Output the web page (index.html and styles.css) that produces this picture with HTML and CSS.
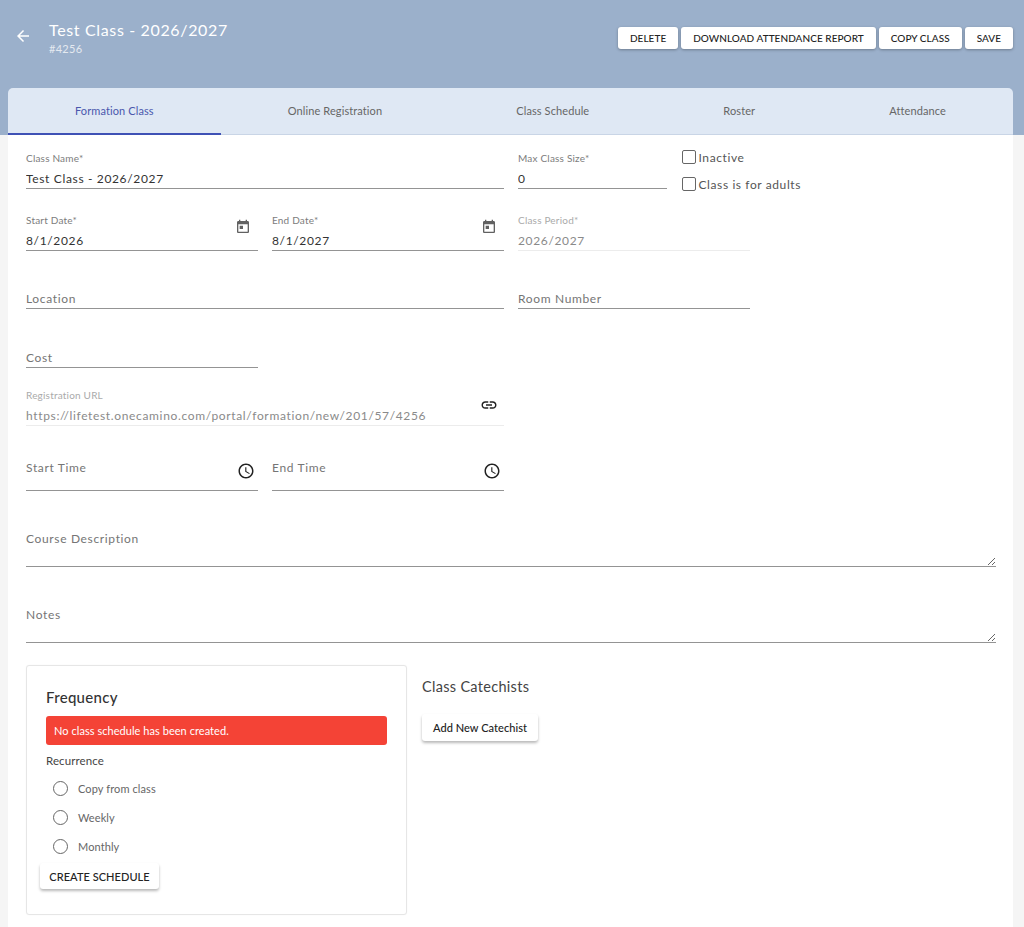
FILE: index.html
```html
<!DOCTYPE html>
<html lang="en">
<head>
  <meta charset="UTF-8" />
  <meta name="viewport" content="width=device-width, initial-scale=1.0"/>
  <title>Test Class - 2026/2027</title>
  <link rel="stylesheet" href="styles.css">
</head>
<body>
  <header class="hero">
    <div class="hero-top">
      <a class="back-link">
        <svg class="back-icon" viewBox="0 0 24 24"><path d="M20 11H7.83l5.59-5.59L12 4l-8 8 8 8 1.41-1.41L7.83 13H20v-2z"/></svg>
      </a>
      <div class="hero-title">
        <h1>Test Class - 2026/2027</h1>
        <p>#4256</p>
      </div>
      <div class="hero-actions">
        <button class="btn">Delete</button>
        <button class="btn">Download Attendance Report</button>
        <button class="btn">Copy Class</button>
        <button class="btn">Save</button>
      </div>
    </div>

    <nav class="tabs">
      <a class="tab active">Formation Class</a>
      <a class="tab">Online Registration</a>
      <a class="tab">Class Schedule</a>
      <a class="tab">Roster</a>
      <a class="tab">Attendance</a>
    </nav>
  </header>

  <main class="panel">
    <div class="row row-first">
      <div class="field w-double">
        <label>Class Name*</label>
        <input type="text" value="Test Class - 2026/2027" />
      </div>
      <div class="field w-small">
        <label>Max Class Size*</label>
        <input type="text" value="0" />
      </div>
      <div class="checks">
        <label class="check"><input type="checkbox" /> Inactive</label>
        <label class="check"><input type="checkbox" /> Class is for adults</label>
      </div>
    </div>

    <div class="row row-dates">
      <div class="field w-single">
        <label>Start Date*</label>
        <input type="text" value="8/1/2026" />
        <svg class="icon icon-date" viewBox="0 0 24 24"><path d="M19 3h-1V1h-2v2H8V1H6v2H5c-1.11 0-1.99.9-1.99 2L3 19c0 1.1.89 2 2 2h14c1.1 0 2-.9 2-2V5c0-1.1-.9-2-2-2zm0 16H5V8h14v11zM7 10h5v5H7z"/></svg>
      </div>
      <div class="field w-single">
        <label>End Date*</label>
        <input type="text" value="8/1/2027" />
        <svg class="icon icon-date" viewBox="0 0 24 24"><path d="M19 3h-1V1h-2v2H8V1H6v2H5c-1.11 0-1.99.9-1.99 2L3 19c0 1.1.89 2 2 2h14c1.1 0 2-.9 2-2V5c0-1.1-.9-2-2-2zm0 16H5V8h14v11zM7 10h5v5H7z"/></svg>
      </div>
      <div class="field w-single disabled">
        <label>Class Period*</label>
        <input type="text" value="2026/2027" disabled />
      </div>
    </div>

    <div class="row">
      <div class="field w-double">
        <input type="text" placeholder="Location" />
      </div>
      <div class="field w-single">
        <input type="text" placeholder="Room Number" />
      </div>
    </div>

    <div class="row row-cost">
      <div class="field w-single">
        <input type="text" placeholder="Cost" />
      </div>
    </div>

    <div class="row">
      <div class="field w-double disabled">
        <label>Registration URL</label>
        <input type="text" value="https://lifetest.onecamino.com/portal/formation/new/201/57/4256" disabled />
        <svg class="icon icon-link" viewBox="0 0 24 24"><path d="M3.9 12c0-1.71 1.39-3.1 3.1-3.1h4V7H7c-2.76 0-5 2.24-5 5s2.24 5 5 5h4v-1.9H7c-1.71 0-3.1-1.39-3.1-3.1zM8 13h8v-2H8v2zm9-6h-4v1.9h4c1.71 0 3.1 1.39 3.1 3.1s-1.39 3.1-3.1 3.1h-4V17h4c2.76 0 5-2.24 5-5s-2.24-5-5-5z"/></svg>
      </div>
    </div>

    <div class="row row-times">
      <div class="field w-single time">
        <input type="text" placeholder="Start Time" />
        <svg class="icon icon-time" viewBox="0 0 24 24"><path d="M11.99 2C6.47 2 2 6.48 2 12s4.47 10 9.99 10C17.52 22 22 17.52 22 12S17.52 2 11.99 2zM12 20c-4.42 0-8-3.58-8-8s3.58-8 8-8 8 3.58 8 8-3.58 8-8 8zm.5-13H11v6l5.25 3.15.75-1.23-4.5-2.67z"/></svg>
      </div>
      <div class="field w-single time">
        <input type="text" placeholder="End Time" />
        <svg class="icon icon-time" viewBox="0 0 24 24"><path d="M11.99 2C6.47 2 2 6.48 2 12s4.47 10 9.99 10C17.52 22 22 17.52 22 12S17.52 2 11.99 2zM12 20c-4.42 0-8-3.58-8-8s3.58-8 8-8 8 3.58 8 8-3.58 8-8 8zm.5-13H11v6l5.25 3.15.75-1.23-4.5-2.67z"/></svg>
      </div>
    </div>

    <div class="row row-text">
      <div class="field w-full">
        <textarea placeholder="Course Description"></textarea>
      </div>
    </div>

    <div class="row row-text">
      <div class="field w-full">
        <textarea placeholder="Notes"></textarea>
      </div>
    </div>

    <div class="bottom">
      <section class="frequency">
        <h2>Frequency</h2>
        <div class="alert">No class schedule has been created.</div>
        <p class="recurrence">Recurrence</p>
        <label class="radio"><input type="radio" name="recurrence" /> Copy from class</label>
        <label class="radio"><input type="radio" name="recurrence" /> Weekly</label>
        <label class="radio"><input type="radio" name="recurrence" /> Monthly</label>
        <button class="btn btn-raised btn-create">Create Schedule</button>
      </section>

      <section class="catechists">
        <h2>Class Catechists</h2>
        <button class="btn btn-raised btn-add">Add New Catechist</button>
      </section>
    </div>
  </main>
</body>
</html>
```

FILE: styles.css
```css
* {
  box-sizing: border-box;
}

html,
body {
  height: 100%;
}

body {
  margin: 0;
  display: flex;
  flex-direction: column;
  overflow: hidden;
  background: #f5f5f5;
  color: #333;
  font-family: Lato, "Open Sans", sans-serif;
}

/* Header */
.hero {
  height: 135px;
  padding: 0 11px 0 8px;
  background: #9bb0cb;
  display: flex;
  flex-direction: column;
  flex-shrink: 0;
}

.hero-top {
  height: 88px;
  display: flex;
  align-items: flex-start;
}

.back-link {
  margin: 27px 0 0 6px;
  height: 18px;
}

.back-icon {
  width: 18px;
  height: 18px;
  fill: #fff;
  display: block;
}

.hero-title {
  margin: 21px 0 0 17px;
  color: #fff;
}

.hero-title h1 {
  margin: 0;
  font-size: 16px;
  line-height: 18px;
  font-weight: 400;
  letter-spacing: 0.65px;
}

.hero-title p {
  margin: 3px 0 0;
  font-size: 11px;
  line-height: 14px;
  color: #e4e9f0;
  letter-spacing: 0.3px;
}

.hero-actions {
  margin: 27px 0 0 auto;
  display: flex;
  gap: 3px;
}

.btn {
  height: 22px;
  padding: 0 12px;
  border: none;
  border-radius: 3px;
  background: #fff;
  color: #222;
  font-family: inherit;
  font-size: 10px;
  font-weight: 500;
  text-transform: uppercase;
  letter-spacing: 0.05px;
  box-shadow: 0 1px 3px rgba(0, 0, 0, 0.3);
  cursor: pointer;
}

.btn-raised {
  box-shadow: 0 2px 3px rgba(0, 0, 0, 0.28);
}

/* Tabs */
.tabs {
  height: 47px;
  display: flex;
  background: #dfe8f4;
  border-radius: 5px 5px 0 0;
  border-bottom: 1px solid #c9d5e6;
}

.tab {
  flex: 1 1 auto;
  text-align: center;
  padding-top: 16px;
  height: 47px;
  font-size: 11px;
  line-height: 14px;
  color: #666;
  letter-spacing: 0.1px;
}

.tab.active {
  color: #4a57ad;
  border-bottom: 2px solid #3f51b5;
}

/* Form */
.panel {
  flex: 1;
  margin: 0 11px 0 8px;
  padding: 14px 17px 0 18px;
  background: #fff;
}

.row {
  display: flex;
  align-items: flex-end;
  gap: 14.5px;
  height: 40px;
  margin-top: 18px;
}

.row-first {
  margin-top: 0;
}

.row-dates {
  margin-top: 22px;
}

.row-cost {
  margin-top: 19px;
}

.row-times {
  height: 47px;
}

.row-text {
  height: 58px;
}

.field {
  position: relative;
  display: flex;
  flex-direction: column;
}

.w-single {
  width: 231.5px;
}

.w-double {
  width: 477.5px;
}

.w-small {
  width: 149px;
}

.w-full {
  width: 970px;
}

.field label {
  font-size: 10px;
  line-height: 13px;
  color: #7c7c7c;
  letter-spacing: 0.2px;
}

.field input,
.field textarea {
  display: block;
  width: 100%;
  height: 20px;
  padding: 0;
  margin-top: 4px;
  border: none;
  border-bottom: 1px solid #949494;
  border-radius: 0;
  outline: none;
  background: transparent;
  color: #333;
  font-family: inherit;
  font-size: 12px;
  letter-spacing: 0.65px;
}

.field input::placeholder,
.field textarea::placeholder {
  color: #757575;
  opacity: 1;
}

.field.time input {
  height: 34px;
  padding-bottom: 13px;
}

.field textarea {
  height: 40px;
  padding-top: 4px;
  line-height: 16px;
  resize: vertical;
}

.field.disabled label {
  color: #aaa;
}

.field.disabled input {
  color: #8a8a8a;
  border-bottom-color: #ececec;
}

.icon {
  position: absolute;
}

.icon-date {
  width: 16px;
  height: 16px;
  right: 7px;
  top: 5px;
  fill: #616161;
}

.icon-link {
  width: 18px;
  height: 18px;
  right: 6px;
  top: 7px;
  fill: #222;
}

.icon-time {
  width: 18px;
  height: 18px;
  right: 3px;
  top: 9px;
  fill: #222;
}

/* Checkboxes */
.checks {
  align-self: flex-start;
  margin-top: -1px;
  display: flex;
  flex-direction: column;
  gap: 9px;
}

.check {
  display: flex;
  align-items: center;
  gap: 3px;
  height: 18px;
  font-size: 12px;
  color: #555;
  letter-spacing: 0.6px;
}

.check input {
  appearance: none;
  width: 14px;
  height: 14px;
  margin: 0;
  border: 1.5px solid #666;
  border-radius: 2px;
}

/* Bottom section */
.bottom {
  display: flex;
  gap: 15px;
  margin-top: 22px;
}

.frequency {
  width: 381px;
  height: 250px;
  padding: 20px 19px 0;
  border: 1px solid #e6e6e6;
  border-radius: 3px;
  box-shadow: 0 0 1px rgba(0, 0, 0, 0.08);
}

.frequency h2 {
  margin: 0;
  font-size: 15px;
  line-height: 22px;
  font-weight: 500;
  color: #333;
  letter-spacing: 0.3px;
}

.alert {
  height: 29px;
  margin-top: 8px;
  padding-left: 8px;
  border-radius: 3px;
  background: #f44336;
  color: #fff;
  font-size: 11px;
  line-height: 29px;
  letter-spacing: 0.05px;
}

.recurrence {
  margin: 8px 0 6px;
  font-size: 11.5px;
  line-height: 15px;
  color: #444;
  letter-spacing: 0.1px;
}

.radio {
  display: flex;
  align-items: center;
  gap: 10px;
  height: 29px;
  padding-left: 7px;
  font-size: 11px;
  color: #666;
  letter-spacing: 0.1px;
}

.radio input {
  appearance: none;
  width: 15px;
  height: 15px;
  margin: 0;
  border: 1.5px solid #666;
  border-radius: 50%;
}

.btn-create {
  display: block;
  height: 26px;
  width: 119px;
  margin: 2px 0 0 -6px;
  padding: 0;
  font-size: 11px;
}

.catechists h2 {
  margin: 13px 0 0;
  font-size: 14.5px;
  line-height: 18px;
  font-weight: 400;
  color: #444;
  letter-spacing: 0.3px;
}

.btn-add {
  display: block;
  height: 27px;
  width: 116px;
  margin-top: 18px;
  padding: 0;
  font-size: 11px;
  text-transform: none;
}
```
